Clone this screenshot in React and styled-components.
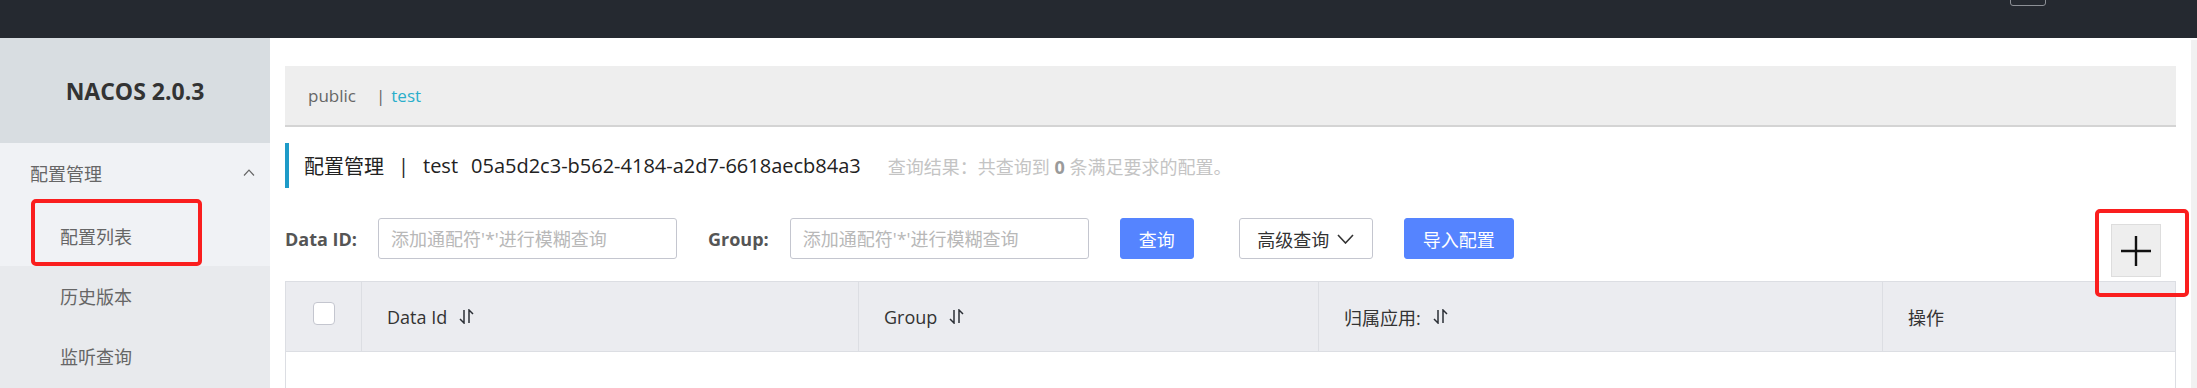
import React from 'react';
import styled, { createGlobalStyle } from 'styled-components';

const GlobalStyle = createGlobalStyle`
  html, body {
    margin: 0;
    padding: 0;
    background: #fff;
    font-family: "Open Sans", "Noto Sans CJK SC", sans-serif;
    overflow: hidden;
  }
  * { box-sizing: border-box; }
`;

const Page = styled.div`
  width: 2197px;
  height: 388px;
  display: flex;
  flex-direction: column;
  overflow: hidden;
`;

const TopBar = styled.header`
  height: 38px;
  flex-shrink: 0;
  background: #252930;
  display: flex;
  justify-content: flex-end;
  align-items: flex-start;
  padding-right: 151px;
  overflow: hidden;
`;

const GhostButton = styled.div`
  width: 36px;
  height: 30px;
  margin-top: -24px;
  border: 1px solid #8d9096;
  border-radius: 3px;
`;

const Body = styled.div`
  flex: 1;
  display: flex;
  min-height: 0;
`;

const Sidebar = styled.aside`
  width: 270px;
  flex-shrink: 0;
  background: #e8eaed;
  display: flex;
  flex-direction: column;

  & > * { flex-shrink: 0; }
`;

const Logo = styled.div`
  height: 105px;
  background: #d8dde1;
  display: flex;
  align-items: center;
  justify-content: center;
  font-size: 23px;
  font-weight: 700;
  color: #333;
`;

const MenuGroup = styled.div`
  background: #f0f2f5;
`;

const GroupTitle = styled.div`
  height: 63px;
  display: flex;
  align-items: center;
  justify-content: space-between;
  padding: 0 15px 4px 30px;
  font-size: 18px;
  color: #666;
`;

const MenuItem = styled.div`
  position: relative;
  height: 60px;
  display: flex;
  align-items: center;
  padding-left: 60px;
  font-size: 18px;
  color: #666;
  background: ${p => (p.$active ? '#f0f2f5' : 'transparent')};
`;

const Highlight = styled.div`
  position: absolute;
  border: 4px solid #fa1e1e;
  border-radius: 5px;
  pointer-events: none;
  z-index: 5;
  top: ${p => p.$top}px;
  left: ${p => p.$left}px;
  right: ${p => p.$right}px;
  bottom: ${p => p.$bottom}px;
`;

const Main = styled.main`
  flex: 1;
  padding: 28px 15px 0;
  display: flex;
  flex-direction: column;
  min-width: 0;

  & > * { flex-shrink: 0; }
`;

const Scrollbar = styled.div`
  width: 6px;
  flex-shrink: 0;
  margin-top: 2px;
  background: #f1f1f1;
`;

const Breadcrumb = styled.div`
  height: 61px;
  background: #eeeeee;
  border-bottom: 2px solid #d4d4d4;
  display: flex;
  align-items: center;
  padding-left: 23px;
  font-size: 17px;
`;

const Crumb = styled.span`
  color: ${p => (p.$active ? '#2aaecb' : '#666')};
`;

const CrumbSep = styled.span`
  color: #666;
  margin: 0 6px 0 20px;
`;

const TitleRow = styled.div`
  margin-top: 16px;
  height: 45px;
  border-left: 4px solid #1e9bc8;
  padding-left: 15px;
  display: flex;
  align-items: center;
  font-size: 20px;
  color: #222;
  white-space: nowrap;
`;

const TitleSep = styled.span`
  margin: 0 14px;
`;

const Uuid = styled.span`
  margin-left: 13px;
`;

const ResultNote = styled.span`
  margin-left: 27px;
  font-size: 18px;
  color: #c4c4c4;

  b {
    color: #9a9a9a;
    font-weight: 700;
  }
`;

const Toolbar = styled.div`
  margin-top: 30px;
  display: flex;
  align-items: flex-start;
`;

const Field = styled.label`
  display: flex;
  align-items: center;
  height: 41px;
  margin-right: 31px;
  gap: 21px;
`;

const FieldLabel = styled.span`
  font-size: 18px;
  font-weight: 700;
  color: #555;
`;

const TextInput = styled.input`
  width: 299px;
  height: 41px;
  border: 1px solid #c4c6cf;
  border-radius: 3px;
  padding: 0 12px;
  font-family: inherit;
  font-size: 18px;
  color: #333;
  outline: none;

  &::placeholder {
    color: #b8b8b8;
  }
`;

const Button = styled.button`
  height: 41px;
  width: ${p => p.$w}px;
  margin-right: ${p => p.$mr || 0}px;
  border-radius: 3px;
  font-family: inherit;
  font-size: 18px;
  display: flex;
  align-items: center;
  justify-content: center;
  gap: 8px;
  padding: 0;
  cursor: pointer;
  border: 1px solid ${p => (p.$primary ? '#5584ff' : '#c4c6cf')};
  background: ${p => (p.$primary ? '#5584ff' : '#fff')};
  color: ${p => (p.$primary ? '#fff' : '#333')};
`;

const AddWrap = styled.div`
  position: relative;
  margin-left: auto;
  margin-right: 15px;
  margin-top: 6px;
`;

const AddButton = styled.div`
  width: 50px;
  height: 53px;
  background: #eeeeee;
  border: 1px solid #dddddd;
  display: flex;
  align-items: center;
  justify-content: center;
`;

const Table = styled.div`
  margin-top: 4px;
  border-left: 1px solid #dcdee3;
  border-right: 1px solid #dcdee3;
`;

const HeadRow = styled.div`
  display: grid;
  grid-template-columns: 76px 497px 460px 564px 1fr;
  height: 71px;
  background: #ebecf0;
  border-top: 1px solid #dcdee3;
  border-bottom: 1px solid #dcdee3;
`;

const HeadCell = styled.div`
  display: flex;
  align-items: center;
  justify-content: ${p => (p.$center ? 'center' : 'flex-start')};
  padding-left: ${p => (p.$center ? 0 : 25)}px;
  border-right: ${p => (p.$last ? 'none' : '1px solid #dcdee3')};
  font-size: 18px;
  color: #333;
  gap: 11px;
`;

const Checkbox = styled.span`
  width: 22px;
  height: 23px;
  margin-top: -6px;
  border: 1px solid #c4c6cf;
  border-radius: 4px;
  background: #fff;
`;

const TableBody = styled.div`
  height: 80px;
  background: #fff;
`;

const SortIcon = () => (
  <svg width="17" height="15" viewBox="0 0 17 15" fill="none" stroke="#2b2f36" strokeWidth="1.5">
    <path d="M6 1V14L2 10" />
    <path d="M11 14V1L15 5" />
  </svg>
);

const ChevronUp = () => (
  <svg width="12" height="7" viewBox="0 0 12 7" fill="none" stroke="#666" strokeWidth="1.2">
    <path d="M1 6.5L6 1.2L11 6.5" />
  </svg>
);

const ChevronDown = () => (
  <svg width="17" height="10" viewBox="0 0 17 10" fill="none" stroke="#333" strokeWidth="1.6">
    <path d="M1 1L8.5 9L16 1" />
  </svg>
);

const PlusIcon = () => (
  <svg width="30" height="30" viewBox="0 0 30 30" stroke="#111" strokeWidth="2.4">
    <path d="M0 15H30M15 0V30" />
  </svg>
);

const columns = [
  { label: 'Data Id', sort: true },
  { label: 'Group', sort: true },
  { label: '归属应用:', sort: true },
  { label: '操作', sort: false, last: true },
];

export default function App() {
  return (
    <Page>
      <GlobalStyle />
      <TopBar>
        <GhostButton />
      </TopBar>
      <Body>
        <Sidebar>
          <Logo>NACOS 2.0.3</Logo>
          <MenuGroup>
            <GroupTitle>
              配置管理
              <ChevronUp />
            </GroupTitle>
            <MenuItem $active>
              配置列表
              <Highlight $top={-7} $left={31} $right={68} $bottom={0} />
            </MenuItem>
          </MenuGroup>
          <MenuItem>历史版本</MenuItem>
          <MenuItem>监听查询</MenuItem>
        </Sidebar>

        <Main>
          <Breadcrumb>
            <Crumb>public</Crumb>
            <CrumbSep>|</CrumbSep>
            <Crumb $active>test</Crumb>
          </Breadcrumb>

          <TitleRow>
            配置管理
            <TitleSep>|</TitleSep>
            test
            <Uuid>05a5d2c3-b562-4184-a2d7-6618aecb84a3</Uuid>
            <ResultNote>
              查询结果：共查询到 <b>0</b> 条满足要求的配置。
            </ResultNote>
          </TitleRow>

          <Toolbar>
            <Field>
              <FieldLabel>Data ID:</FieldLabel>
              <TextInput placeholder="添加通配符'*'进行模糊查询" />
            </Field>
            <Field>
              <FieldLabel>Group:</FieldLabel>
              <TextInput placeholder="添加通配符'*'进行模糊查询" />
            </Field>
            <Button $primary $w={74} $mr={45}>查询</Button>
            <Button $w={134} $mr={31}>
              高级查询
              <ChevronDown />
            </Button>
            <Button $primary $w={110}>导入配置</Button>
            <AddWrap>
              <AddButton>
                <PlusIcon />
              </AddButton>
              <Highlight $top={-15} $left={-16} $right={-28} $bottom={-20} />
            </AddWrap>
          </Toolbar>

          <Table>
            <HeadRow>
              <HeadCell $center>
                <Checkbox />
              </HeadCell>
              {columns.map(col => (
                <HeadCell key={col.label} $last={col.last}>
                  {col.label}
                  {col.sort && <SortIcon />}
                </HeadCell>
              ))}
            </HeadRow>
            <TableBody />
          </Table>
        </Main>
        <Scrollbar />
      </Body>
    </Page>
  );
}
